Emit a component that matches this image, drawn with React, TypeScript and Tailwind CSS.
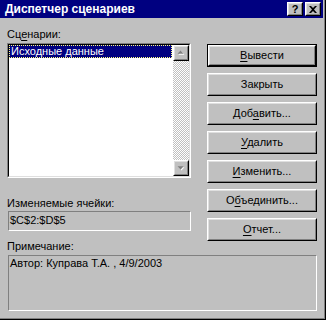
import React from 'react';

const font = { fontFamily: '"Liberation Sans", Arial, sans-serif' };

// raised win98 bevel
const Raised = ({ children, className = "" }: { children: React.ReactNode; className?: string }) => (
  <div className={`bg-[#c0c0c0] border border-t-white border-l-white border-r-black border-b-black ${className}`}>
    <div className="h-full w-full border border-t-[#dfdfdf] border-l-[#dfdfdf] border-r-[#808080] border-b-[#808080] flex items-center justify-center">
      {children}
    </div>
  </div>
);

const Btn = ({ children, isDefault = false }: { children: React.ReactNode; isDefault?: boolean }) => (
  <div className={`h-[23px] w-[110px] ${isDefault ? 'border border-black' : ''}`}>
    <Raised className="h-full w-full">
      <span className="text-[11px] leading-[13px] text-black">{children}</span>
    </Raised>
  </div>
);

const U = ({ children }: { children: React.ReactNode }) => (
  <span className="underline underline-offset-[2px]">{children}</span>
);

const Arrow = ({ down = false }: { down?: boolean }) => (
  <svg width="14" height="14" viewBox="0 0 14 14">
    {down ? (
      <>
        <path d="M4 6h7l-3.5 4z" fill="#ffffff" />
        <path d="M3 5h7l-3.5 4z" fill="#808080" />
      </>
    ) : (
      <>
        <path d="M4 9h7l-3.5-4z" fill="#ffffff" />
        <path d="M3 8h7l-3.5-4z" fill="#808080" />
      </>
    )}
  </svg>
);

export default function App() {
  return (
    <div className="w-[326px] h-[320px] bg-[#c0c0c0] border-r border-b border-black" style={font}>
      <div className="h-full w-full border-r border-b border-[#808080] pr-px">
        {/* Title bar */}
        <div className="h-[18px] bg-[#000080] flex items-center pl-[5px] pr-[2px]">
          <span className="text-white text-[12px] font-bold leading-[16px] flex-1">Диспетчер сценариев</span>
          <div className="flex gap-[2px]">
            <Raised className="w-[16px] h-[14px]">
              <span className="text-[11px] font-bold leading-[10px] text-black">?</span>
            </Raised>
            <Raised className="w-[16px] h-[14px]">
              <svg width="8" height="7" viewBox="0 0 8 7">
                <path d="M0 0h2l2 2 2-2h2L5 3.5 8 7H6L4 5 2 7H0l3-3.5z" fill="#000" />
              </svg>
            </Raised>
          </div>
        </div>

        <div className="pl-[7px] pt-[10px] text-[11px] leading-[13px] text-black">
          <div className="flex">
            {/* left column */}
            <div className="w-[184px] flex flex-col">
              <div>Сц<U>е</U>нарии:</div>
              <div className="mt-[2px] h-[135px] border border-t-[#808080] border-l-[#808080] border-r-white border-b-white">
                <div className="h-full w-full border border-t-black border-l-black border-r-[#dfdfdf] border-b-[#dfdfdf] bg-white flex">
                  <div className="flex-1">
                    <div className="h-[13px] bg-[#000080] border border-dotted border-[#ffff80] text-white pl-px leading-[11px] mr-px">
                      Исходные данные
                    </div>
                  </div>
                  <div className="w-[16px] flex flex-col bg-[image:repeating-conic-gradient(#c0c0c0_0%_25%,#ffffff_0%_50%)] bg-[length:2px_2px]">
                    <Raised className="w-[16px] h-[16px]"><Arrow /></Raised>
                    <div className="flex-1" />
                    <Raised className="w-[16px] h-[16px]"><Arrow down /></Raised>
                  </div>
                </div>
              </div>
              <div className="mt-[19px]">Изменяемые ячейки:</div>
              <div className="mt-px ml-px h-[20px] w-[183px] border border-t-[#808080] border-l-[#808080] border-r-white border-b-white pt-[2px] pl-px">
                $C$2:$D$5
              </div>
              <div className="mt-[9px]">Примечание:</div>
            </div>

            {/* right column */}
            <div className="ml-[16px] mt-[16px] flex flex-col gap-[6px]">
              <Btn isDefault><U>В</U>ывести</Btn>
              <Btn>Закрыть</Btn>
              <Btn>Доб<U>а</U>вить...</Btn>
              <Btn><U>У</U>далить</Btn>
              <Btn><U>И</U>зменить...</Btn>
              <Btn>О<U>б</U>ъединить...</Btn>
              <Btn><U>О</U>тчет...</Btn>
            </div>
          </div>

          <div className="mt-[2px] ml-px h-[56px] w-[309px] border border-t-[#808080] border-l-[#808080] border-r-white border-b-white pt-[1px] pl-px">
            Автор: Куправа Т.А. , 4/9/2003
          </div>
        </div>
      </div>
    </div>
  );
}
